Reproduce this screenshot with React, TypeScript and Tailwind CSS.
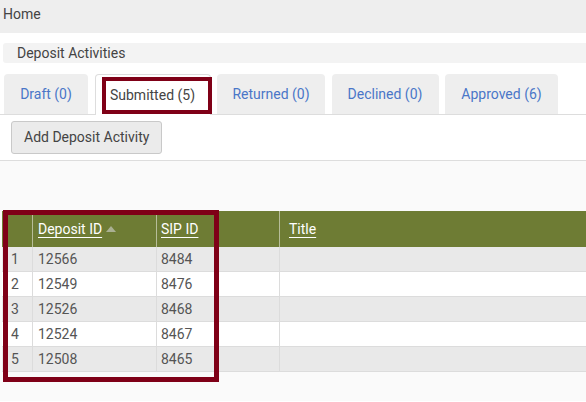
import React from 'react';

const tabs = [
  { label: 'Draft (0)', w: 'w-[84px]' },
  { label: 'Submitted (5)', w: 'w-[116px]', active: true },
  { label: 'Returned (0)', w: 'w-[108px]' },
  { label: 'Declined (0)', w: 'w-[107px]' },
  { label: 'Approved (6)', w: 'w-[113px]' },
];

const rows = [
  ['1', '12566', '8484'],
  ['2', '12549', '8476'],
  ['3', '12526', '8468'],
  ['4', '12524', '8467'],
  ['5', '12508', '8465'],
];

export default function App() {
  return (
    <div className="w-[586px] h-[402px] overflow-hidden bg-white text-[14px] text-[#444] font-['Roboto',sans-serif]">
      <div className="h-[33px] bg-[#eeeeee] pl-[3px] flex items-center pb-[4px]">Home</div>
      <div className="mt-[10px] ml-[3px] h-[20px] bg-[#f3f3f3] rounded-l-[3px] pl-[14px] flex items-center text-[14px]">
        Deposit Activities
      </div>
      {/* tabs */}
      <div className="mt-[11px] flex gap-[6.5px] pl-[4px] h-[41px] border-b border-[#dddddd] relative">
        {tabs.map((t) => (
          <div
            key={t.label}
            className={
              t.active
                ? `${t.w} relative -mb-px bg-white border border-b-0 border-[#dddddd] rounded-t-[4px] flex items-center justify-center text-[#444]`
                : `${t.w} bg-[#eeeeee] rounded-t-[4px] flex items-center justify-center text-[#4a76c8]`
            }
          >
            {t.label}
            {t.active && (
              <div className="absolute left-[6px] top-[2px] w-[110px] h-[37px] border-[4px] border-[#7f0017]" />
            )}
          </div>
        ))}
      </div>
      <div className="h-[46px] pl-[11px] pt-[6px] border-b border-[#dddddd]">
        <button className="h-[33px] px-[12px] bg-[#ebebeb] border border-[#c9c9c9] rounded-[3px] text-[14px] text-[#444]">
          Add Deposit Activity
        </button>
      </div>
      {/* table area */}
      <div className="bg-[#fafafa] h-[240px] pt-[50px] pl-[2px] relative">
        <div className="grid grid-cols-[30px_124px_123px_1fr]">
          <div className="h-[36px] bg-[#6e7c34]" />
          <div className="h-[36px] bg-[#6e7c34] border-l border-[#b7bd99] pl-[5px] flex items-center gap-[4px]">
            <span className="text-white underline underline-offset-[3px]">Deposit ID</span>
            <svg width="10" height="6" viewBox="0 0 10 6"><path d="M0 6 L5 0 L10 6 Z" fill="#aab092" /></svg>
          </div>
          <div className="h-[36px] bg-[#6e7c34] border-l border-[#b7bd99] pl-[4px] flex items-center">
            <span className="text-white underline underline-offset-[3px]">SIP ID</span>
          </div>
          <div className="h-[36px] bg-[#6e7c34] border-l border-[#b7bd99] pl-[9px] flex items-center">
            <span className="text-white underline underline-offset-[3px]">Title</span>
          </div>
          {rows.map((r, i) => {
            const bg = i % 2 === 0 ? 'bg-[#e9e9e9]' : 'bg-white';
            const cell = `h-[25px] ${bg} border-b border-[#dcdcdc] flex items-center text-[#555]`;
            return (
              <React.Fragment key={r[0]}>
                <div className={`${cell} pl-[9px]`}>{r[0]}</div>
                <div className={`${cell} border-l pl-[5px]`}>{r[1]}</div>
                <div className={`${cell} border-l pl-[4px]`}>{r[2]}</div>
                <div className={`${cell} border-l`} />
              </React.Fragment>
            );
          })}
        </div>
        <div className="absolute left-[3px] top-[49px] w-[216px] h-[172px] border-[5px] border-[#7f0017]" />
      </div>
    </div>
  );
}
